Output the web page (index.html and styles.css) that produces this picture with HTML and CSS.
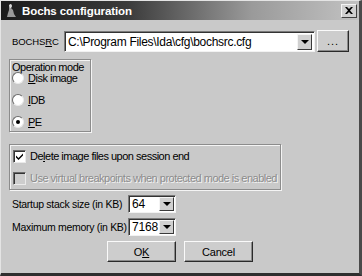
FILE: index.html
```html
<!DOCTYPE html>
<html lang="en">
<head>
    <meta charset="UTF-8">
    <title>Bochs configuration</title>
    <link rel="stylesheet" href="styles.css">
</head>
<body>
    <div class="window">
        <div class="titlebar">
            <svg class="appicon" width="12" height="14" viewBox="0 0 12 14">
                <path d="M4 1 L6 0 L7 2 L6 4 L8 6 L9 10 L11 13 L2 13 L3 9 L4 6 Z" fill="#9a9a9a"/>
                <path d="M4 1 L6 0 L7 2 L6 4 L5 4 Z" fill="#d8d8d8"/>
            </svg>
            <span class="title">Bochs configuration</span>
            <div class="close">
                <svg width="8" height="7" viewBox="0 0 8 7">
                    <path d="M0 0 L2 0 L4 2 L6 0 L8 0 L5 3.5 L8 7 L6 7 L4 5 L2 7 L0 7 L3 3.5 Z" fill="#000"/>
                </svg>
            </div>
        </div>
        <div class="content">
            <div class="row bochsrc">
                <span class="label-src">BOCHS<u>R</u>C</span>
                <div class="combo combo-wide">
                    <span class="combo-text">C:\Program Files\Ida\cfg\bochsrc.cfg</span>
                    <span class="drop"><i></i></span>
                </div>
                <button class="btn btn-dots">...</button>
            </div>

            <div class="group group-mode">
                <div class="legend">Operation mode</div>
                <div class="radio-row"><span class="radio"></span><u>D</u>isk image</div>
                <div class="radio-row"><span class="radio"></span><u>I</u>DB</div>
                <div class="radio-row"><span class="radio checked"></span><u>P</u>E</div>
            </div>

            <div class="group group-opts">
                <div class="check-row">
                    <span class="check">
                        <svg width="9" height="9" viewBox="0 0 9 9"><path d="M1 3.5 L3.5 6 L8 1.5 L8 3.5 L3.5 8 L1 5.5 Z" fill="#000"/></svg>
                    </span>
                    De<u>l</u>ete image files upon session end
                </div>
                <div class="check-row disabled">
                    <span class="check"></span>
                    Use virtual breakpoints when protected mode is enabled
                </div>
            </div>

            <div class="row field-row">
                <span class="field-label">Startup stack size (in KB)</span>
                <div class="combo combo-small">
                    <span class="combo-text">64</span>
                    <span class="drop"><i></i></span>
                </div>
            </div>
            <div class="row field-row">
                <span class="field-label">Maximum memory (in KB)</span>
                <div class="combo combo-small">
                    <span class="combo-text">7168</span>
                    <span class="drop"><i></i></span>
                </div>
            </div>

            <div class="buttons">
                <button class="btn btn-main btn-ok">O<u>K</u></button>
                <button class="btn btn-main">Cancel</button>
            </div>
        </div>
    </div>
</body>
</html>
```

FILE: styles.css
```css
body {
    margin: 0;
    padding: 0;
    background-color: #c9c9c9;
    font-family: "Liberation Sans", Arial, sans-serif;
    font-size: 11px;
    letter-spacing: -0.5px;
    white-space: nowrap;
    color: #000;
}
.window {
    width: 362px;
    height: 276px;
    box-sizing: border-box;
    background-color: #c9c9c9;
    border-top: 1px solid #e4e4e4;
    border-left: 1px solid #e4e4e4;
    border-right: 3px solid #4a4a4a;
    border-bottom: 3px solid #2e2e2e;
    overflow: hidden;
}
.titlebar {
    height: 19px;
    display: flex;
    align-items: center;
    padding: 0 2px 0 4px;
    background: linear-gradient(to right, #1c1c1c 0%, #3a3a3a 35%, #9a9a9a 70%, #c2c2c2 100%);
}
.appicon {
    margin-right: 5px;
}
.title {
    flex: 1;
    color: #fff;
    font-weight: bold;
    font-size: 11.5px;
    letter-spacing: -0.1px;
}
.close {
    width: 16px;
    height: 14px;
    box-sizing: border-box;
    background: #d0d0d0;
    border-top: 1px solid #f4f4f4;
    border-left: 1px solid #f4f4f4;
    border-right: 1px solid #404040;
    border-bottom: 1px solid #404040;
    display: flex;
    align-items: center;
    justify-content: center;
}
.content {
    padding: 10px 0 0 8px;
}
.row {
    display: flex;
    align-items: center;
}
.bochsrc {
    height: 22px;
}
.label-src {
    width: 52px;
    flex-shrink: 0;
    padding-left: 3px;
    font-size: 9.5px;
    letter-spacing: -0.1px;
}
.combo {
    display: flex;
    align-items: center;
    flex-shrink: 0;
    box-sizing: border-box;
    background: #fff;
    border-top: 1px solid #7a7a7a;
    border-left: 1px solid #7a7a7a;
    border-right: 1px solid #f2f2f2;
    border-bottom: 1px solid #f2f2f2;
    box-shadow: inset 1px 1px 0 #333;
    padding: 2px 2px 2px 3px;
}
.combo-text {
    flex: 1;
    overflow: hidden;
}
.drop {
    width: 15px;
    height: 15px;
    flex-shrink: 0;
    box-sizing: border-box;
    background: #d0d0d0;
    border-top: 1px solid #f4f4f4;
    border-left: 1px solid #f4f4f4;
    border-right: 1px solid #3a3a3a;
    border-bottom: 1px solid #3a3a3a;
    display: flex;
    align-items: center;
    justify-content: center;
}
.drop i {
    width: 0;
    height: 0;
    border-left: 4px solid transparent;
    border-right: 4px solid transparent;
    border-top: 4px solid #000;
}
.combo-wide {
    width: 251px;
    height: 21px;
    font-size: 12px;
    letter-spacing: -0.3px;
    margin-top: 1px;
}
.combo-wide .drop {
    height: 16px;
}
.btn {
    font-family: "Liberation Sans", Arial, sans-serif;
    font-size: 11px;
    letter-spacing: -0.2px;
    color: #000;
    background: #cdcdcd;
    box-sizing: border-box;
    border-top: 1px solid #fafafa;
    border-left: 1px solid #fafafa;
    border-right: 1px solid #2a2a2a;
    border-bottom: 1px solid #2a2a2a;
    box-shadow: inset -1px -1px 0 #8a8a8a;
    padding: 0;
    flex-shrink: 0;
}
.btn-dots {
    width: 32px;
    height: 22px;
    margin-left: 2px;
    letter-spacing: 1px;
}
.group {
    box-sizing: border-box;
    border: 1px solid #8c8c8c;
    box-shadow: inset 1px 1px 0 #f4f4f4, 1px 1px 0 #f4f4f4;
}
.group-mode {
    width: 82px;
    height: 73px;
    margin-top: 7px;
    padding: 1px 0 0 2px;
}
.legend {
    line-height: 12px;
    margin-bottom: -6px;
}
.radio-row {
    display: flex;
    align-items: center;
    height: 22px;
}
.radio {
    width: 12px;
    height: 12px;
    flex-shrink: 0;
    box-sizing: border-box;
    border-radius: 50%;
    background: #fff;
    border-top: 1px solid #6a6a6a;
    border-left: 1px solid #6a6a6a;
    border-right: 1px solid #eaeaea;
    border-bottom: 1px solid #eaeaea;
    margin-right: 4px;
    display: flex;
    align-items: center;
    justify-content: center;
}
.radio.checked::after {
    content: "";
    width: 4px;
    height: 4px;
    border-radius: 50%;
    background: #000;
}
.group-opts {
    width: 272px;
    height: 46px;
    margin-top: 12px;
    padding: 0 0 0 3px;
}
.check-row {
    display: flex;
    align-items: center;
    height: 22px;
}
.check {
    width: 13px;
    height: 13px;
    flex-shrink: 0;
    box-sizing: border-box;
    background: #fff;
    border-top: 1px solid #6a6a6a;
    border-left: 1px solid #6a6a6a;
    border-right: 1px solid #eaeaea;
    border-bottom: 1px solid #eaeaea;
    box-shadow: inset 1px 1px 0 #333;
    margin-right: 4px;
    display: flex;
    align-items: center;
    justify-content: center;
}
.check-row.disabled {
    color: #8c8c8c;
    text-shadow: 1px 1px 0 #f4f4f4;
}
.check-row.disabled .check {
    background: #cdcdcd;
}
.field-row {
    height: 18px;
    margin-top: 5px;
}
.field-label {
    width: 116px;
    flex-shrink: 0;
    padding-left: 3px;
    font-size: 10.5px;
    letter-spacing: -0.3px;
}
.combo-small {
    width: 48px;
    height: 18px;
    padding: 0 1px 0 3px;
    font-size: 12px;
    letter-spacing: -0.2px;
}
.combo-small .drop {
    width: 15px;
    height: 14px;
}
.buttons {
    display: flex;
    gap: 8px;
    margin: 5px 0 0 98px;
}
.btn-main {
    width: 69px;
    height: 21px;
}
```
